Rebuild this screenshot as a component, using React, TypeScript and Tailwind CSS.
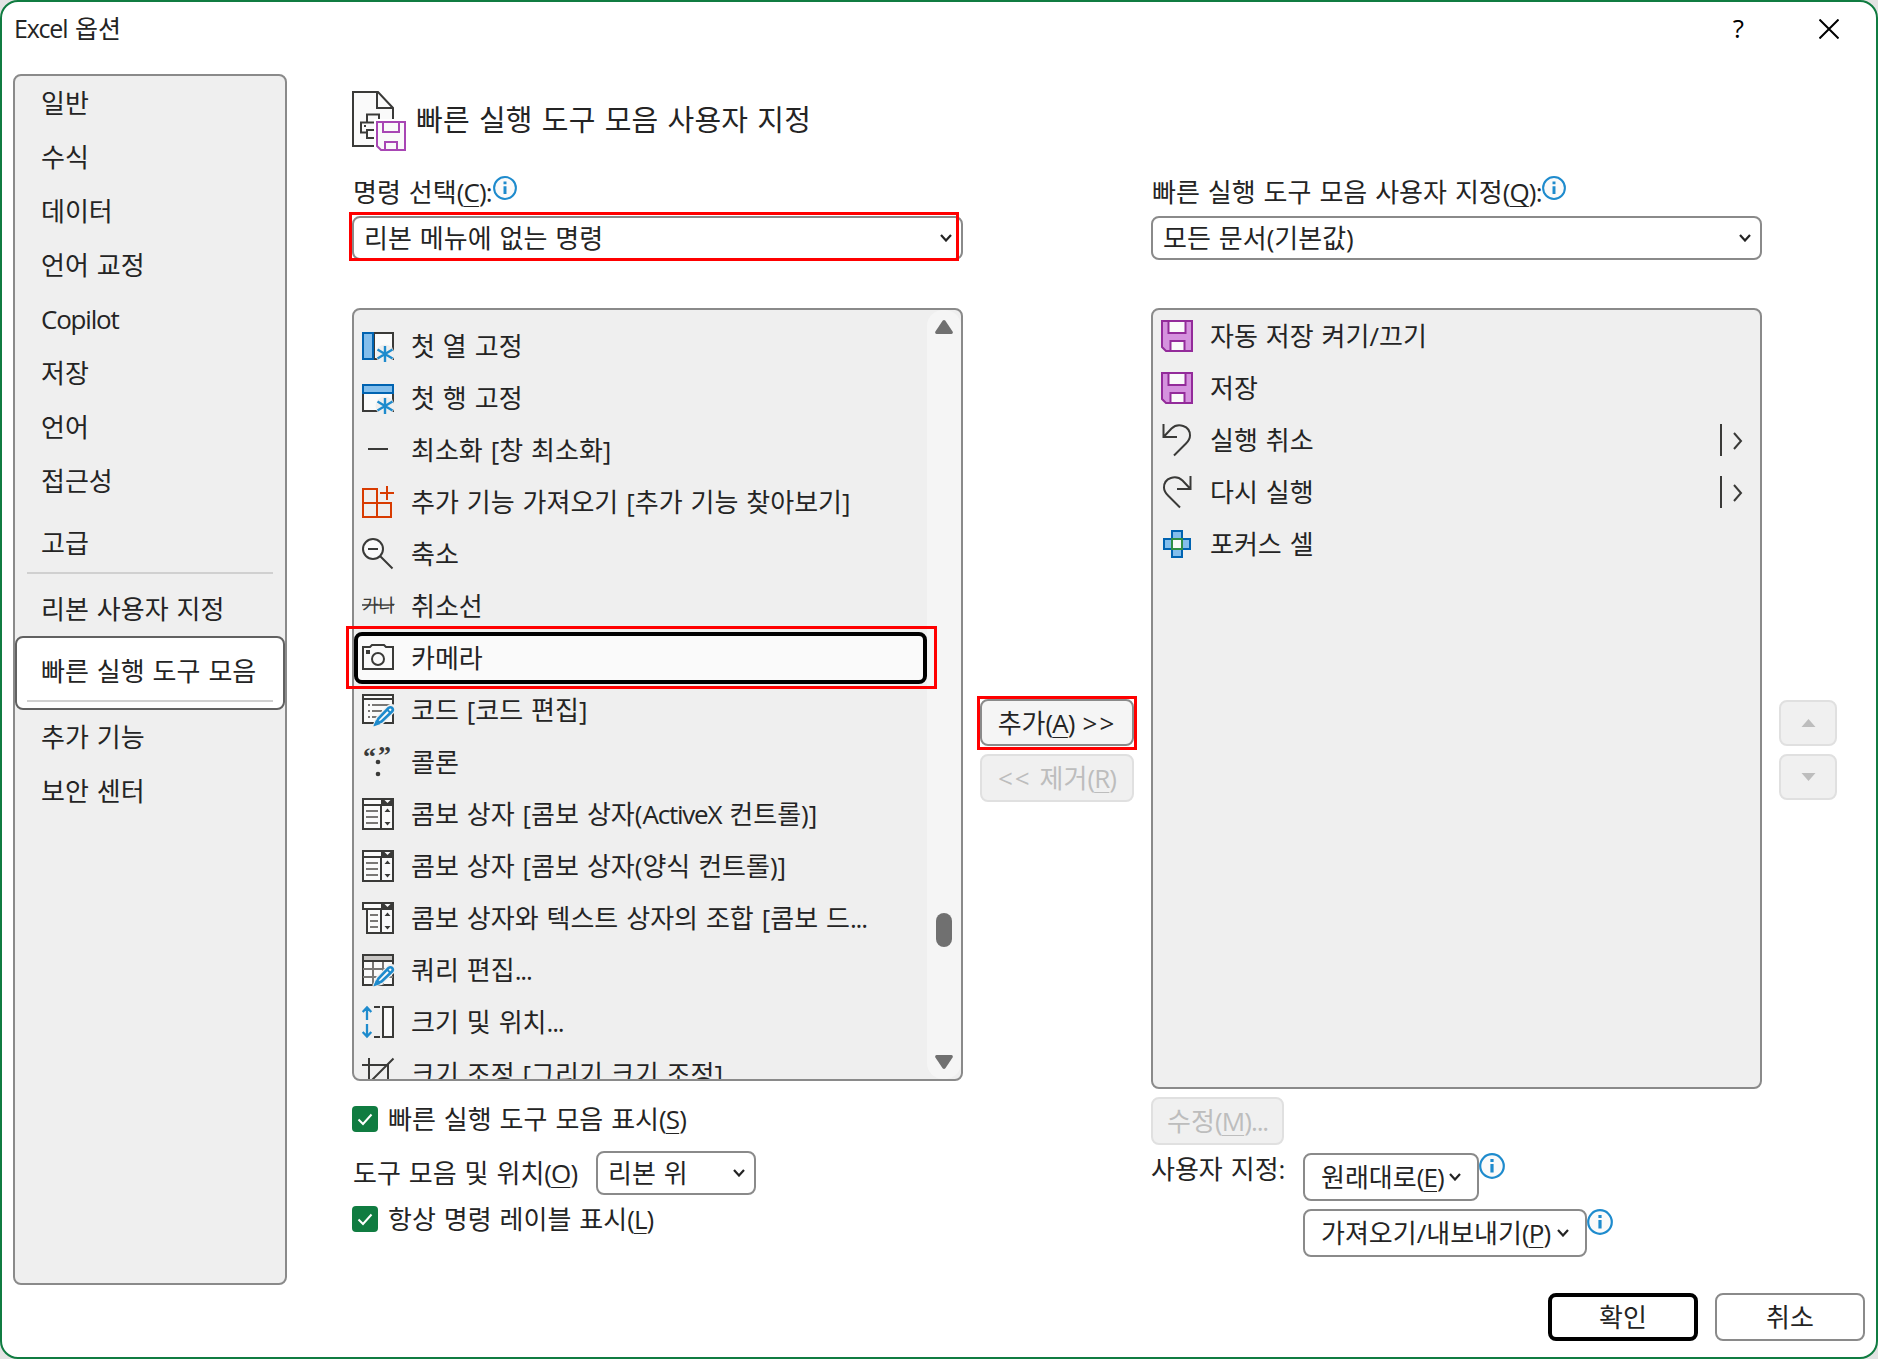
import React from "react";

type Command = {
  icon: React.ReactNode;
  label: string;
  selected?: boolean;
  more?: boolean;
};

const DARK = "#3a3a38";
const BLUE = "#1e8bcd";

function Icon({ children }: { children?: React.ReactNode }) {
  return (
    <svg width="32" height="32" viewBox="0 0 32 32" fill="none" stroke={DARK} strokeWidth="2" className="shrink-0 overflow-visible">
      {children}
    </svg>
  );
}

function Star() {
  return (
    <>
      <circle cx="23" cy="24" r="9.5" fill="#efefef" stroke="none" />
      <path d="M23 16V32M15.5 19.5L30.5 28.5M30.5 19.5L15.5 28.5" stroke={BLUE} strokeWidth="2.4" />
    </>
  );
}

function Pencil() {
  return (
    <>
      <path d="M10 33L14 23L26 11Q29 9 33 11V18L20 31Z" fill="#efefef" stroke="none" />
      <path d="M14 29.5L16.5 24.5L26.5 14Q28.5 12.5 30.2 14Q31.6 15.8 30 17.5L19.5 27.5Z" fill="#fafafa" stroke={BLUE} strokeWidth="2.6" />
      <path d="M11.5 32.5L14 26L18.5 30Z" fill={BLUE} stroke="none" />
      <path d="M25 15.5L28.5 19" stroke={BLUE} />
    </>
  );
}

function ComboParts() {
  return (
    <>
      <path d="M19 0H32V7H19Z" fill={DARK} stroke="none" />
      <path d="M22.5 2H28.5L25.5 5Z" fill="#fafafa" stroke="none" />
      <path d="M19 6V31" />
      <path d="M22.5 14H28.5L25.5 10.5ZM22.5 24H28.5L25.5 27.5Z" fill={DARK} stroke="none" />
    </>
  );
}

const comboBox = (
  <Icon>
    <path d="M1 1H31V31H1ZM1 7H31" fill="#fafafa" />
    <path d="M4 13H16M4 19H16M4 25H16" stroke="#797775" />
    <ComboParts />
  </Icon>
);

const saveIcon = (
  <Icon>
    <path d="M1 1H31V31H5L1 27Z" fill="#d592de" stroke="#932b9a" />
    <path d="M7.5 1H24.5V13H7.5ZM9.5 31V21H23.5V31Z" fill="#fafafa" stroke="#932b9a" />
  </Icon>
);

const commands: Command[] = [
  {
    label: "첫 열 고정",
    icon: (
      <Icon>
        <path d="M12 3H31V29H12Z" fill="#fafafa" />
        <path d="M1 3H11V29H1Z" fill="#83beec" stroke="#0063b1" />
        <Star />
      </Icon>
    ),
  },
  {
    label: "첫 행 고정",
    icon: (
      <Icon>
        <path d="M1 11H31V29H1Z" fill="#fafafa" />
        <path d="M1 3H31V11H1Z" fill="#83beec" stroke="#0063b1" />
        <Star />
      </Icon>
    ),
  },
  { label: "최소화 [창 최소화]", icon: <Icon><path d="M6 15H26" /></Icon> },
  {
    label: "추가 기능 가져오기 [추가 기능 찾아보기]",
    icon: (
      <Icon>
        <path d="M15 17V3H1V31H29V17H1M15 17V31M25 0V14M18 7H32" stroke="#d83b01" />
      </Icon>
    ),
  },
  {
    label: "축소",
    icon: (
      <Icon>
        <circle cx="11" cy="11" r="10" fill="#fafafa" />
        <path d="M6 11H16M18 18L30.5 30.5" />
      </Icon>
    ),
  },
  {
    label: "취소선",
    icon: (
      <Icon>
        <text x="0" y="22" fontSize="18" textLength="33" lengthAdjust="spacingAndGlyphs" fill={DARK} stroke="none">가나</text>
        <path d="M0 15H32" strokeWidth="1.5" />
      </Icon>
    ),
  },
  {
    label: "카메라",
    selected: true,
    icon: (
      <Icon>
        <path d="M1 5H8L10 3H22L24 5H31V27H1Z" fill="#fafafa" />
        <circle cx="16" cy="17" r="6" />
        <path d="M4 8H8V12H4Z" fill={DARK} stroke="none" />
      </Icon>
    ),
  },
  {
    label: "코드 [코드 편집]",
    icon: (
      <Icon>
        <path d="M1 1H31V29H1ZM1 5H31" fill="#fafafa" />
        <path d="M6 11H8M10 11H28M6 17H8M10 17H20M6 23H8M10 23H15" stroke="#797775" />
        <Pencil />
      </Icon>
    ),
  },
  {
    label: "콜론",
    icon: (
      <Icon>
        <g fill={DARK} stroke="none" fontFamily="Liberation Serif" fontWeight="700" fontSize="26">
          <text x="1" y="19">“</text>
          <text x="16" y="18">”</text>
          <circle cx="16" cy="16" r="2.3" />
          <circle cx="16" cy="28" r="2.3" />
        </g>
      </Icon>
    ),
  },
  { label: "콤보 상자 [콤보 상자(ActiveX 컨트롤)]", icon: comboBox },
  { label: "콤보 상자 [콤보 상자(양식 컨트롤)]", icon: comboBox },
  {
    label: "콤보 상자와 텍스트 상자의 조합 [콤보 드...",
    icon: (
      <Icon>
        <path d="M1 1H31V7H1ZM5 7H31V31H5Z" fill="#fafafa" />
        <path d="M8 13H16M8 19H16M8 25H16" stroke="#797775" />
        <ComboParts />
      </Icon>
    ),
  },
  {
    label: "쿼리 편집...",
    icon: (
      <Icon>
        <path d="M1 1H31V31H1Z" fill="#fafafa" />
        <path d="M11 7V31M21 7V31M1 15H31M1 23H31" stroke="#797775" />
        <path d="M1 1H31V7H1Z" fill="#c8c6c4" />
        <Pencil />
      </Icon>
    ),
  },
  {
    label: "크기 및 위치...",
    icon: (
      <Icon>
        <path d="M5 14V2M0.7 6L5 1.5L9.3 6M5 18V30M0.7 26L5 30.5L9.3 26" stroke={BLUE} strokeWidth="2.3" />
        <path d="M12 1H18M12 31H18" />
        <path d="M21 1H31V31H21Z" fill="#fafafa" />
      </Icon>
    ),
  },
  {
    label: "크기 조정 [그리기 크기 조정]",
    icon: (
      <Icon>
        <path d="M7 0V26H32M0 7H26V32M31.5 0.5L6 26" />
      </Icon>
    ),
  },
];

const toolbar: Command[] = [
  { label: "자동 저장 켜기/끄기", icon: saveIcon },
  { label: "저장", icon: saveIcon },
  {
    label: "실행 취소",
    more: true,
    icon: (
      <Icon>
        <path d="M2.5 0V13H16M2.5 13L10.5 4.5C17 -1.5 29 1.5 29 11.5C29 15 27.5 17 25 19.5L13 31.5" />
      </Icon>
    ),
  },
  {
    label: "다시 실행",
    more: true,
    icon: (
      <Icon>
        <path d="M29.5 0V13H16M29.5 13L21.5 4.5C15 -1.5 3 1.5 3 11.5C3 15 4.5 17 7 19.5L19 31.5" />
      </Icon>
    ),
  },
  {
    label: "포커스 셀",
    icon: (
      <Icon>
        <path d="M11 3H21V11H29V21H21V29H11V21H3V11H11Z" fill="#83beec" stroke="#0063b1" />
        <path d="M11 11H21V21H11Z" fill="#fafafa" stroke="#2f8f46" />
      </Icon>
    ),
  },
];

// Latin runs are set a little tighter than the Hangul around them
function Label({ text }: { text: string }) {
  return (
    <>
      {text.split(/([A-Za-z.]{3,})/).map((part, i) =>
        i % 2 ? <span key={i} className="tracking-[-1.2px]">{part}</span> : part
      )}
    </>
  );
}

function Mnemonic({ k }: { k: string }) {
  return (
    <span className="tracking-[-0.9px]">
      (<span className="underline decoration-1 underline-offset-[4px]">{k}</span>)
    </span>
  );
}

function Chevron() {
  return (
    <svg width="12" height="8" viewBox="0 0 12 8" fill="none" stroke="#242424" strokeWidth="2.2" className="shrink-0">
      <path d="M1 1L6 6.5L11 1" />
    </svg>
  );
}

function Info({ size = 26 }: { size?: number }) {
  return (
    <svg width={size} height={size} viewBox="0 0 26 26" className="shrink-0">
      <circle cx="13" cy="13" r="11.8" fill="#fafafa" stroke={BLUE} strokeWidth="2.2" />
      <path d="M11.4 6H14.6V9H11.4ZM11.4 11H14.6V19.5H11.4Z" fill={BLUE} />
    </svg>
  );
}

function Select({ value, className }: { value: string; className: string }) {
  return (
    <div className={`flex h-11 items-center justify-between rounded-lg border-2 border-[#8a8a8a] bg-white ${className}`}>
      <span>{value}</span>
      <Chevron />
    </div>
  );
}

function CheckBox({ label, k }: { label: string; k: string }) {
  return (
    <div className="flex h-[26px] items-center gap-2.5">
      <svg width="26" height="26" viewBox="0 0 26 26" fill="none" className="shrink-0">
        <rect width="26" height="26" rx="4" fill="#107c41" />
        <path d="M6.5 13.5L11 18L19.5 8.5" stroke="white" strokeWidth="2" />
      </svg>
      <span>{label}<Mnemonic k={k} /></span>
    </div>
  );
}

function NavItem({ label }: { label: string }) {
  return (
    <div className="flex h-[54px] items-center pl-[26px]">
      <span><Label text={label} /></span>
    </div>
  );
}

function Row({ item }: { item: Command }) {
  if (item.selected) {
    return (
      <div className="flex h-[52px] w-[573px] shrink-0 items-center rounded-lg border-4 border-black bg-[#fafafa] pl-1">
        {item.icon}
        <span className="ml-[17px]">{item.label}</span>
      </div>
    );
  }
  return (
    <div className="flex h-[52px] shrink-0 items-center pl-2">
      {item.icon}
      <span className="ml-[17px] grow"><Label text={item.label} /></span>
      {item.more && (
        <svg width="24" height="32" viewBox="0 0 24 32" fill="none" stroke={DARK} strokeWidth="2" className="mr-4">
          <path d="M1 0V32M14 9L21 17L14 25" />
        </svg>
      )}
    </div>
  );
}

export default function App() {
  return (
    <div className="h-[1359px] w-[1878px] overflow-hidden bg-[#e3e3e3] font-['Open_Sans','Noto_Sans_CJK_KR',sans-serif] text-[26px] leading-8 [word-spacing:1.2px] whitespace-nowrap text-[#242424]">
      <div className="flex h-full flex-col rounded-[18px] border-2 border-[#107c41] bg-white">
        <header className="flex h-[72px] shrink-0 items-start pt-2.5 pr-[37px] pl-3">
          <span className="grow text-[25px]"><Label text="Excel 옵션" /></span>
          <span className="font-medium text-black">?</span>
          <svg width="20" height="20" viewBox="0 0 20 20" stroke="black" strokeWidth="2" className="mt-[7px] ml-[75px]">
            <path d="M0.5 0.5L19.5 19.5M19.5 0.5L0.5 19.5" />
          </svg>
        </header>

        <div className="flex h-[1211px] shrink-0 pl-[11px]">
          <nav className="w-[274px] shrink-0 rounded-lg border-2 border-[#8a8a8a] bg-[#efefef]">
            <NavItem label="일반" />
            <NavItem label="수식" />
            <NavItem label="데이터" />
            <NavItem label="언어 교정" />
            <NavItem label="Copilot" />
            <NavItem label="저장" />
            <NavItem label="언어" />
            <NavItem label="접근성" />
            <div className="mx-3 mb-2 flex h-[66px] items-center border-b-2 border-[#d0d0d0] pt-1.5 pl-3.5">고급</div>
            <NavItem label="리본 사용자 지정" />
            <div className="h-[74px] rounded-lg border-2 border-[#616161] bg-white px-2.5">
              <div className="flex h-16 items-center border-b-2 border-[#d0d0d0] pt-1 pl-3.5">빠른 실행 도구 모음</div>
            </div>
            <NavItem label="추가 기능" />
            <NavItem label="보안 센터" />
          </nav>

          <main className="ml-[65px] flex flex-col pt-[17px]">
            <div className="flex h-[85px] shrink-0">
              <svg width="54" height="60" viewBox="0 0 54 60" fill="none" stroke={DARK} strokeWidth="2">
                <path d="M23 55H1V1H26L41 17V28V55Z" fill="#fafafa" stroke="none" />
                <path d="M22 55H1V1H26L41 17V28M25 1V17H41" />
                <path d="M27 28V23.5H15V31M22 31.5H9V41.5H15M22 39H15V47H22" />
                <path d="M12 34H14V36H12Z" fill={DARK} stroke="none" />
                <path d="M22 28H54V60H26L22 55Z" fill="white" stroke="none" />
                <path d="M25 31H53V59H29L25 55Z" fill="#fafafa" stroke="#a846b4" />
                <path d="M31 31V41H47V31M33 59V51H45V59" stroke="#a846b4" />
              </svg>
              <h1 className="ml-2.5 pt-[13px] text-[29px] font-normal tracking-[0.2px] [word-spacing:1.4px]">빠른 실행 도구 모음 사용자 지정</h1>
            </div>

            <div className="flex">
              <section className="w-[611px]">
                <div className="flex h-10 pl-px">
                  <span>명령 선택<Mnemonic k="C" />:</span>
                  <Info size={24} />
                </div>
                <div className="relative">
                  <Select value="리본 메뉴에 없는 명령" className="pr-[9px] pl-2.5" />
                  <div className="absolute -top-1 -left-[3px] h-[49px] w-[610px] border-3 border-[#ff0000]" />
                </div>

                <div className="relative mt-12">
                  <div className="flex h-[773px] overflow-hidden rounded-lg border-2 border-[#8a8a8a] bg-[#efefef]">
                    <div className="flex h-[769px] w-[573px] flex-col overflow-hidden pt-2.5">
                      {commands.map((item) => (
                        <Row key={item.label} item={item} />
                      ))}
                    </div>
                    <div className="flex grow flex-col items-center rounded-2xl bg-[#f5f5f5] py-2.5">
                      <svg width="18" height="14" viewBox="0 0 18 14" fill="#707070">
                        <path d="M7.6 0.8Q9 -0.6 10.4 0.8L17.6 11.5Q18.4 13.6 16.5 14H1.5Q-0.4 13.6 0.4 11.5Z" />
                      </svg>
                      <div className="mt-[579px] h-[34px] w-4 rounded-full bg-[#707070]" />
                      <svg width="18" height="14" viewBox="0 0 18 14" fill="#707070" className="mt-auto">
                        <path d="M7.6 13.2Q9 14.6 10.4 13.2L17.6 2.5Q18.4 0.4 16.5 0H1.5Q-0.4 0.4 0.4 2.5Z" />
                      </svg>
                    </div>
                  </div>
                  <div className="absolute top-[318px] -left-1.5 h-[63px] w-[591px] border-3 border-[#ff0000]" />
                </div>

                <div className="mt-[25px]">
                  <CheckBox label="빠른 실행 도구 모음 표시" k="S" />
                </div>
                <div className="mt-[19px] flex h-11 items-center">
                  <span className="w-[244px] pl-px">도구 모음 및 위치<Mnemonic k="O" /></span>
                  <Select value="리본 위" className="w-40 pr-[9px] pl-2.5" />
                </div>
                <div className="mt-[11px]">
                  <CheckBox label="항상 명령 레이블 표시" k="L" />
                </div>
              </section>

              <section className="mx-[17px] w-[154px] pt-[523px]">
                <div className="relative flex h-[47px] items-center justify-center rounded-lg border-2 border-[#8a8a8a] bg-[#f5f5f5]">
                  <span>추가<Mnemonic k="A" /> <span className="tracking-[2px]">&gt;&gt;</span></span>
                  <div className="absolute -top-[5px] -left-[5px] h-[54px] w-40 border-3 border-[#ff0000]" />
                </div>
                <div className="mt-2 flex h-12 items-center justify-center rounded-lg border-2 border-[#e0e0e0] bg-[#f0f0f0] text-[#bdbdbd]">
                  <span><span className="tracking-[2px]">&lt;&lt;</span> 제거<Mnemonic k="R" /></span>
                </div>
              </section>

              <section className="w-[611px]">
                <div className="flex h-10 pl-px">
                  <span>빠른 실행 도구 모음 사용자 지정<Mnemonic k="Q" />:</span>
                  <Info size={24} />
                </div>
                <Select value="모든 문서(기본값)" className="pr-[9px] pl-2.5" />
                <div className="mt-12 flex h-[781px] flex-col rounded-lg border-2 border-[#8a8a8a] bg-[#efefef]">
                  {toolbar.map((item) => (
                    <Row key={item.label} item={item} />
                  ))}
                </div>
                <div className="mt-2 flex h-12 w-[133px] items-center justify-center rounded-lg border-2 border-[#e0e0e0] bg-[#f0f0f0] text-[#bdbdbd]">
                  <span>수정<Mnemonic k="M" /><Label text="..." /></span>
                </div>
                <div className="mt-2 flex">
                  <span className="w-[152px]">사용자 지정:</span>
                  <div className="flex flex-col gap-2">
                    <div className="flex">
                      <div className="flex h-12 w-44 items-center justify-between rounded-lg border-2 border-[#8a8a8a] pr-4 pl-4">
                        <span>원래대로<Mnemonic k="E" /></span>
                        <Chevron />
                      </div>
                      <Info />
                    </div>
                    <div className="flex">
                      <div className="flex h-12 w-[284px] items-center justify-between rounded-lg border-2 border-[#8a8a8a] pr-4 pl-4">
                        <span>가져오기/내보내기<Mnemonic k="P" /></span>
                        <Chevron />
                      </div>
                      <Info />
                    </div>
                  </div>
                </div>
              </section>

              <section className="ml-[17px] flex w-[58px] flex-col gap-2 pt-[524px]">
                <div className="flex h-[46px] items-center justify-center rounded-lg border-2 border-[#e0e0e0] bg-[#f0f0f0]">
                  <svg width="15" height="8" viewBox="0 0 14 8" fill="#bdbdbd"><path d="M7 0L14 8H0Z" /></svg>
                </div>
                <div className="flex h-[46px] items-center justify-center rounded-lg border-2 border-[#e0e0e0] bg-[#f0f0f0]">
                  <svg width="15" height="8" viewBox="0 0 14 8" fill="#bdbdbd"><path d="M7 8L14 0H0Z" /></svg>
                </div>
              </section>
            </div>
          </main>
        </div>

        <footer className="mt-2 flex justify-end gap-[17px] pr-[11px]">
          <button className="h-12 w-[150px] rounded-lg border-4 border-black">확인</button>
          <button className="h-12 w-[150px] rounded-lg border-2 border-[#8a8a8a]">취소</button>
        </footer>
      </div>
    </div>
  );
}
